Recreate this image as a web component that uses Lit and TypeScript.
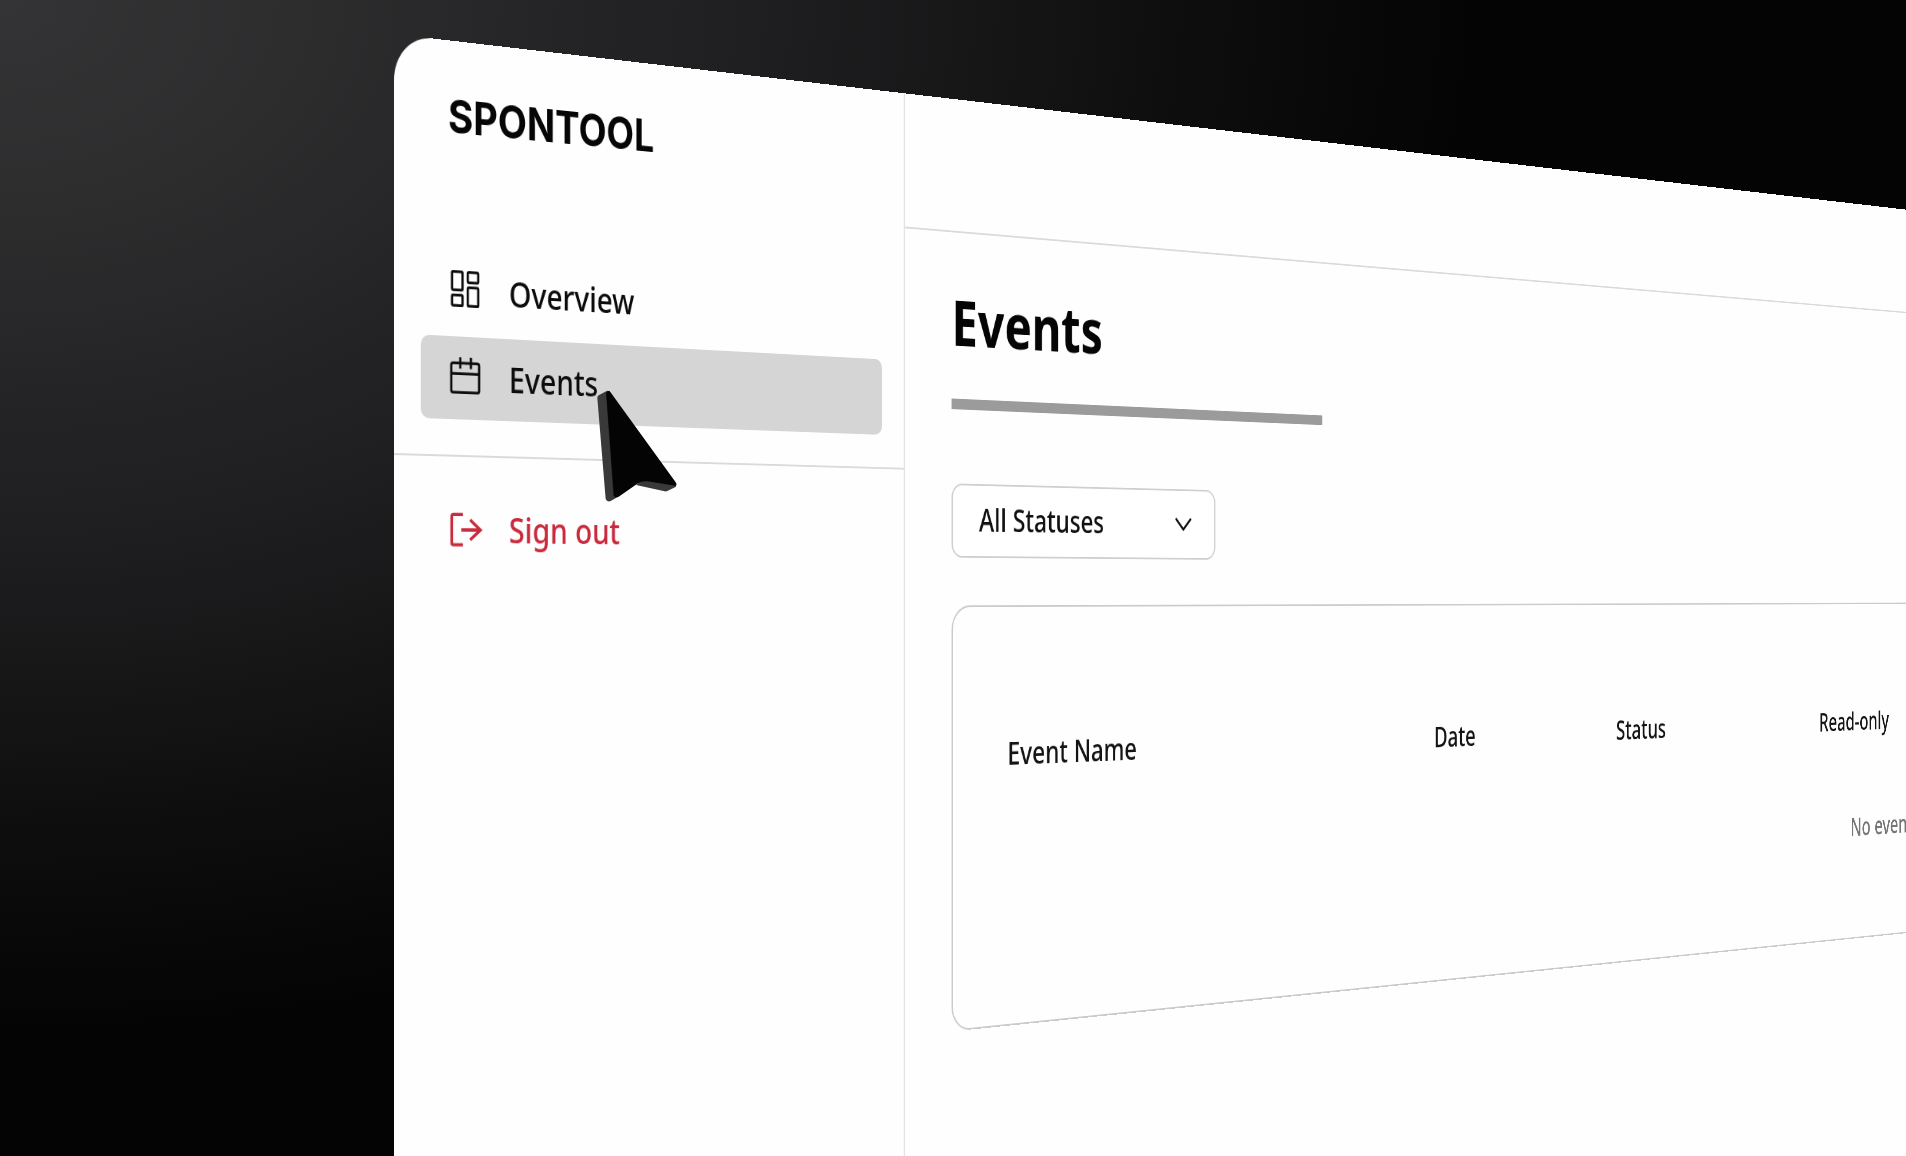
import { LitElement, html, css, svg } from "lit";
import { customElement } from "lit/decorators.js";

const icon = (body: unknown) => html`
  <svg class="icon" viewBox="0 0 24 24" aria-hidden="true">${body}</svg>
`;

const overviewIcon = icon(svg`
  <rect x="3.2" y="1.3" width="7" height="10.1" rx="0.7" />
  <rect x="13.7" y="1.3" width="7" height="5.7" rx="0.7" />
  <rect x="3.2" y="14.3" width="7" height="5.7" rx="0.7" />
  <rect x="13.7" y="9.8" width="7" height="10.2" rx="0.7" />
`);

const calendarIcon = icon(svg`
  <rect x="2.7" y="3.7" width="18.6" height="16.3" rx="1.2" />
  <path d="M2.7 9.6H21.3M8.7 0.6V6.8M15.8 0.6V6.8" />
`);

const signOutIcon = icon(svg`
  <path d="M10.4 3.5H4.2Q3 3.5 3 4.7V19.1Q3 20.3 4.2 20.3H10.4" />
  <path d="M9.4 12H22.2M15.3 6.4L22.2 12L15.3 17.5" />
`);

@customElement("app-sidebar")
export class AppSidebar extends LitElement {
  static styles = css`
    :host {
      display: flex;
      flex-direction: column;
      box-sizing: border-box;
      padding-top: 48px;
      border-right: 2px solid #e3e3e3;
    }
    .logo {
      padding: 0 65px;
      margin-bottom: 107px;
      font: 700 47px/56px Inter, "Liberation Sans", sans-serif;
      color: #060606;
    }
    .nav {
      display: flex;
      flex-direction: column;
      gap: 4px;
      padding: 0 32px 36px;
      border-bottom: 2px solid #dadada;
    }
    .account {
      padding: 32px;
    }
    .link {
      display: flex;
      align-items: center;
      gap: 32px;
      height: 84px;
      padding: 0 32px;
      border-radius: 10px;
      font-size: 36px;
      line-height: 48px;
      color: #0c0c0c;
      text-decoration: none;
    }
    .current {
      background: #d5d5d5;
    }
    .danger {
      color: #c92a3c;
    }
    .icon {
      flex: none;
      width: 44px;
      height: 44px;
      fill: none;
      stroke: currentColor;
      stroke-width: 1.5;
      overflow: visible;
    }
    .danger .icon {
      stroke-width: 1.8;
    }
  `;

  render() {
    return html`
      <div class="logo">SPONTOOL</div>
      <nav class="nav">
        <a class="link" href="#overview">${overviewIcon}<span>Overview</span></a>
        <a class="link current" href="#events" aria-current="page">
          ${calendarIcon}<span>Events</span>
        </a>
      </nav>
      <div class="account">
        <a class="link danger" href="#sign-out">${signOutIcon}<span>Sign out</span></a>
      </div>
    `;
  }
}

@customElement("events-page")
export class EventsPage extends LitElement {
  static styles = css`
    :host {
      display: block;
      padding: 52px 70px;
    }
    .title {
      margin: 0 0 40px;
      font-size: 72px;
      line-height: 96px;
      font-weight: 700;
      color: #050505;
    }
    .bar {
      width: 618px;
      height: 12px;
      margin-bottom: 84px;
      background: #9b9b9b;
    }
    .filter {
      display: grid;
      align-items: center;
      width: 428px;
      margin-bottom: 54px;
    }
    .select {
      grid-area: 1 / 1;
      appearance: none;
      height: 84px;
      padding: 0 40px 4px;
      border: 2px solid #cfcfcf;
      border-radius: 16px;
      background: #fff;
      color: #111;
      font: inherit;
      font-size: 36px;
    }
    .chevron {
      grid-area: 1 / 1;
      justify-self: end;
      width: 28px;
      height: 16px;
      margin-right: 41px;
      fill: none;
      stroke: #111;
      stroke-width: 3;
      pointer-events: none;
    }
    .card {
      padding: 92px 84px 82px;
      border: 2px solid #cbcbcb;
      border-radius: 28px;
    }
    .table {
      width: 100%;
      table-layout: fixed;
      border-collapse: collapse;
      font-size: 36px;
      line-height: 48px;
    }
    .name {
      width: 742px;
    }
    .date {
      width: 370px;
    }
    .status {
      width: 460px;
    }
    .head {
      height: 152px;
      padding: 0;
      text-align: left;
      font-weight: 500;
      color: #141414;
    }
    .empty {
      height: 152px;
      padding: 0;
      text-align: center;
      color: #767676;
    }
  `;

  render() {
    return html`
      <h1 class="title">Events</h1>
      <div class="bar"></div>
      <div class="filter">
        <select class="select" aria-label="Status">
          <option>All Statuses</option>
        </select>
        <svg class="chevron" viewBox="0 0 28 16" aria-hidden="true">
          <path d="M1 1L14 14L27 1" />
        </svg>
      </div>
      <div class="card">
        <table class="table">
          <thead>
            <tr>
              <th class="head name" scope="col">Event Name</th>
              <th class="head date" scope="col">Date</th>
              <th class="head status" scope="col">Status</th>
              <th class="head" scope="col">Read-only</th>
            </tr>
          </thead>
          <tbody>
            <tr>
              <td class="empty" colspan="4">No events</td>
            </tr>
          </tbody>
        </table>
      </div>
    `;
  }
}

@customElement("app-root")
export class AppRoot extends LitElement {
  static styles = css`
    :host {
      display: block;
      position: relative;
      box-sizing: border-box;
      height: 100vh;
      padding: 34px 0 0 394px;
      overflow: hidden;
      background: radial-gradient(
        1500px 1050px at 0 0,
        #343436 0%,
        #2c2c2d 22%,
        #252528 36%,
        #1e1e20 52%,
        #161617 66%,
        #0d0d0d 80%,
        #040404 98%
      ) #040404;
      font-family: "Noto Sans", "Open Sans", sans-serif;
      font-weight: 500;
      perspective: 3830px;
      perspective-origin: 50% 593px;
    }
    /* The window is one flat page, turned away from the viewer about its left edge. */
    .window {
      display: grid;
      grid-template-columns: 680px 1fr;
      width: 234vw;
      min-height: calc(100vh + 320px);
      border-radius: 46px;
      background: #fefefe;
      transform-origin: left;
      transform: rotateY(42deg);
    }
    .topbar {
      height: 149px;
      border-bottom: 2px solid #dadada;
    }
    .cursor {
      position: absolute;
      left: 560px;
      top: 370px;
      width: 140px;
      height: 150px;
      pointer-events: none;
    }
  `;

  render() {
    return html`
      <div class="window">
        <app-sidebar></app-sidebar>
        <main>
          <div class="topbar"></div>
          <events-page></events-page>
        </main>
      </div>
      <svg class="cursor" viewBox="0 0 420 450" aria-hidden="true">
        <path
          fill="#39393a"
          d="M112 84Q111 79 116 76L140 63Q146 61 150 66L190 330L168 384L152 393Q141 397 137 387Z"
        />
        <path fill="#39393a" d="M228 345L246 330L349 341L348 350L322 363Q319 365 314 364Z" />
        <path
          fill="#1d1d1e"
          d="M138 66L150 64L170 384L160 378Z"
        />
        <path
          fill="#040404"
          d="M139 72Q141 58 151 66L347 337Q352 345 346 347L262 334Q246 332 234 340L176 380Q164 386 162 374Z"
        />
      </svg>
    `;
  }
}
